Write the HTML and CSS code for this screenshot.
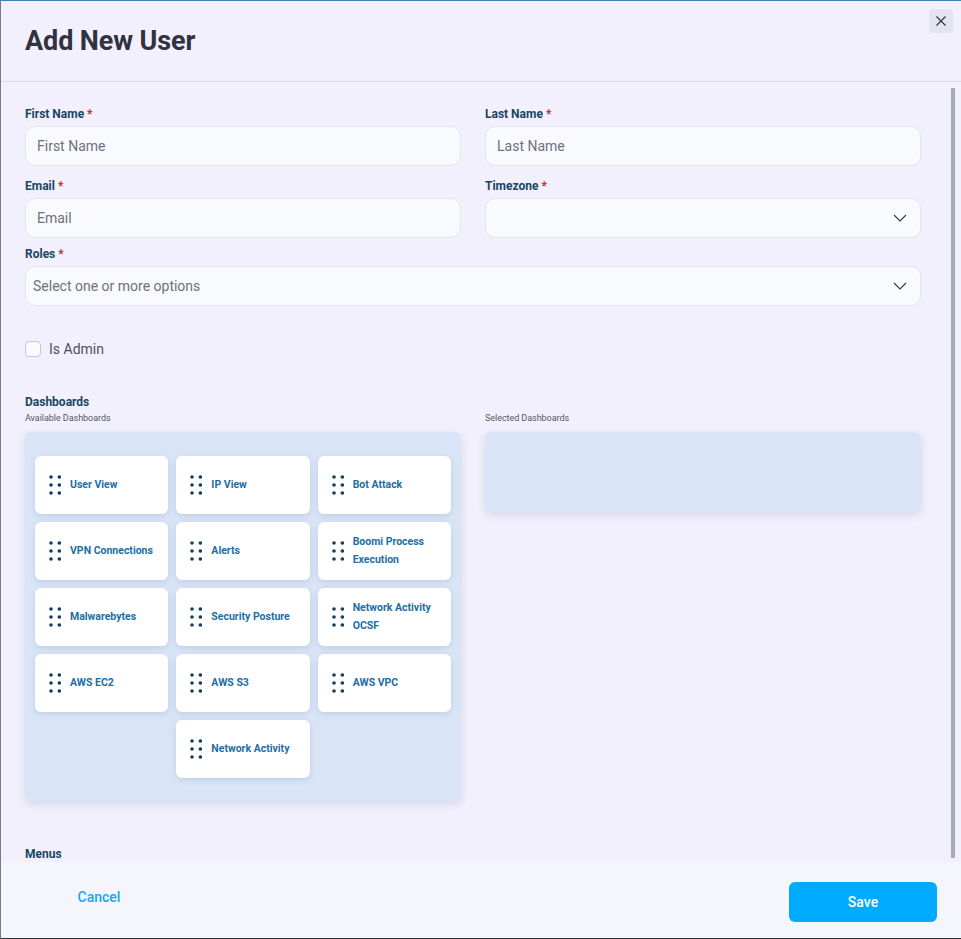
FILE: index.html
```html
<!DOCTYPE html>
<html lang="en">
<head>
<meta charset="utf-8">
<title>Add New User</title>
<link rel="stylesheet" href="styles.css">
</head>
<body>
<div class="modal">
  <header class="modal-header">
    <h1 class="title">Add New User</h1>
    <button class="close-btn" aria-label="Close">
      <svg width="10" height="10" viewBox="0 0 10 10"><path d="M0.5 0.5 L9.5 9.5 M9.5 0.5 L0.5 9.5" stroke="#35363f" stroke-width="1.2" fill="none"/></svg>
    </button>
  </header>

  <section class="modal-body">
    <div class="form-grid">
      <div class="field">
        <label class="label">First Name <span class="req">*</span></label>
        <div class="input"><span class="ph">First Name</span></div>
      </div>
      <div class="field">
        <label class="label">Last Name <span class="req">*</span></label>
        <div class="input"><span class="ph">Last Name</span></div>
      </div>
      <div class="field">
        <label class="label">Email <span class="req">*</span></label>
        <div class="input"><span class="ph">Email</span></div>
      </div>
      <div class="field">
        <label class="label">Timezone <span class="req">*</span></label>
        <div class="input select">
          <span class="ph"></span>
          <svg class="chev" width="14" height="8" viewBox="0 0 14 8"><path d="M1 1 L7 7 L13 1" stroke="#33343c" stroke-width="1.1" fill="none"/></svg>
        </div>
      </div>
    </div>

    <div class="field roles">
      <label class="label">Roles <span class="req">*</span></label>
      <div class="input select roles-input">
        <span class="ph">Select one or more options</span>
        <svg class="chev" width="14" height="8" viewBox="0 0 14 8"><path d="M1 1 L7 7 L13 1" stroke="#33343c" stroke-width="1.1" fill="none"/></svg>
      </div>
    </div>

    <div class="check-row">
      <span class="checkbox"></span>
      <span class="check-label">Is Admin</span>
    </div>

    <div class="label section-label">Dashboards</div>
    <div class="dash-grid">
      <div class="dash-col">
        <div class="sub-label">Available Dashboards</div>
        <div class="dash-box available">
          <div class="card"><svg class="grip" viewBox="0 0 12 20" width="12" height="20"><circle cx="2" cy="2" r="1.8"/><circle cx="10.3" cy="2" r="1.8"/><circle cx="2" cy="10" r="1.8"/><circle cx="10.3" cy="10" r="1.8"/><circle cx="2" cy="18" r="1.8"/><circle cx="10.3" cy="18" r="1.8"/></svg><span class="card-text">User View</span></div>
          <div class="card"><svg class="grip" viewBox="0 0 12 20" width="12" height="20"><circle cx="2" cy="2" r="1.8"/><circle cx="10.3" cy="2" r="1.8"/><circle cx="2" cy="10" r="1.8"/><circle cx="10.3" cy="10" r="1.8"/><circle cx="2" cy="18" r="1.8"/><circle cx="10.3" cy="18" r="1.8"/></svg><span class="card-text">IP View</span></div>
          <div class="card"><svg class="grip" viewBox="0 0 12 20" width="12" height="20"><circle cx="2" cy="2" r="1.8"/><circle cx="10.3" cy="2" r="1.8"/><circle cx="2" cy="10" r="1.8"/><circle cx="10.3" cy="10" r="1.8"/><circle cx="2" cy="18" r="1.8"/><circle cx="10.3" cy="18" r="1.8"/></svg><span class="card-text">Bot Attack</span></div>
          <div class="card"><svg class="grip" viewBox="0 0 12 20" width="12" height="20"><circle cx="2" cy="2" r="1.8"/><circle cx="10.3" cy="2" r="1.8"/><circle cx="2" cy="10" r="1.8"/><circle cx="10.3" cy="10" r="1.8"/><circle cx="2" cy="18" r="1.8"/><circle cx="10.3" cy="18" r="1.8"/></svg><span class="card-text">VPN Connections</span></div>
          <div class="card"><svg class="grip" viewBox="0 0 12 20" width="12" height="20"><circle cx="2" cy="2" r="1.8"/><circle cx="10.3" cy="2" r="1.8"/><circle cx="2" cy="10" r="1.8"/><circle cx="10.3" cy="10" r="1.8"/><circle cx="2" cy="18" r="1.8"/><circle cx="10.3" cy="18" r="1.8"/></svg><span class="card-text">Alerts</span></div>
          <div class="card"><svg class="grip" viewBox="0 0 12 20" width="12" height="20"><circle cx="2" cy="2" r="1.8"/><circle cx="10.3" cy="2" r="1.8"/><circle cx="2" cy="10" r="1.8"/><circle cx="10.3" cy="10" r="1.8"/><circle cx="2" cy="18" r="1.8"/><circle cx="10.3" cy="18" r="1.8"/></svg><span class="card-text">Boomi Process Execution</span></div>
          <div class="card"><svg class="grip" viewBox="0 0 12 20" width="12" height="20"><circle cx="2" cy="2" r="1.8"/><circle cx="10.3" cy="2" r="1.8"/><circle cx="2" cy="10" r="1.8"/><circle cx="10.3" cy="10" r="1.8"/><circle cx="2" cy="18" r="1.8"/><circle cx="10.3" cy="18" r="1.8"/></svg><span class="card-text">Malwarebytes</span></div>
          <div class="card"><svg class="grip" viewBox="0 0 12 20" width="12" height="20"><circle cx="2" cy="2" r="1.8"/><circle cx="10.3" cy="2" r="1.8"/><circle cx="2" cy="10" r="1.8"/><circle cx="10.3" cy="10" r="1.8"/><circle cx="2" cy="18" r="1.8"/><circle cx="10.3" cy="18" r="1.8"/></svg><span class="card-text">Security Posture</span></div>
          <div class="card"><svg class="grip" viewBox="0 0 12 20" width="12" height="20"><circle cx="2" cy="2" r="1.8"/><circle cx="10.3" cy="2" r="1.8"/><circle cx="2" cy="10" r="1.8"/><circle cx="10.3" cy="10" r="1.8"/><circle cx="2" cy="18" r="1.8"/><circle cx="10.3" cy="18" r="1.8"/></svg><span class="card-text">Network Activity OCSF</span></div>
          <div class="card"><svg class="grip" viewBox="0 0 12 20" width="12" height="20"><circle cx="2" cy="2" r="1.8"/><circle cx="10.3" cy="2" r="1.8"/><circle cx="2" cy="10" r="1.8"/><circle cx="10.3" cy="10" r="1.8"/><circle cx="2" cy="18" r="1.8"/><circle cx="10.3" cy="18" r="1.8"/></svg><span class="card-text">AWS EC2</span></div>
          <div class="card"><svg class="grip" viewBox="0 0 12 20" width="12" height="20"><circle cx="2" cy="2" r="1.8"/><circle cx="10.3" cy="2" r="1.8"/><circle cx="2" cy="10" r="1.8"/><circle cx="10.3" cy="10" r="1.8"/><circle cx="2" cy="18" r="1.8"/><circle cx="10.3" cy="18" r="1.8"/></svg><span class="card-text">AWS S3</span></div>
          <div class="card"><svg class="grip" viewBox="0 0 12 20" width="12" height="20"><circle cx="2" cy="2" r="1.8"/><circle cx="10.3" cy="2" r="1.8"/><circle cx="2" cy="10" r="1.8"/><circle cx="10.3" cy="10" r="1.8"/><circle cx="2" cy="18" r="1.8"/><circle cx="10.3" cy="18" r="1.8"/></svg><span class="card-text">AWS VPC</span></div>
          <div class="card col2"><svg class="grip" viewBox="0 0 12 20" width="12" height="20"><circle cx="2" cy="2" r="1.8"/><circle cx="10.3" cy="2" r="1.8"/><circle cx="2" cy="10" r="1.8"/><circle cx="10.3" cy="10" r="1.8"/><circle cx="2" cy="18" r="1.8"/><circle cx="10.3" cy="18" r="1.8"/></svg><span class="card-text">Network Activity</span></div>
        </div>
      </div>
      <div class="dash-col">
        <div class="sub-label">Selected Dashboards</div>
        <div class="dash-box selected"></div>
      </div>
    </div>

    <div class="label menus-label">Menus</div>

    <div class="scrollbar"></div>
  </section>

  <footer class="modal-footer">
    <button class="btn-cancel">Cancel</button>
    <button class="btn-save">Save</button>
  </footer>
</div>
</body>
</html>
```

FILE: styles.css
```css
* { box-sizing: border-box; }
html, body { margin: 0; padding: 0; }
body {
  font-family: Roboto, "Liberation Sans", Arial, sans-serif;
  background: #f1f0fc;
}
.modal {
  width: 961px;
  height: 939px;
  background: #f1f0fc;
  border-top: 1px solid #3f7fb6;
  border-left: 1px solid #7a7a80;
  border-bottom: 1px solid #2f3035;
  display: flex;
  flex-direction: column;
}
.modal-header {
  height: 81px;
  flex: none;
  border-bottom: 1px solid #d9d8e6;
  display: flex;
  align-items: flex-start;
  justify-content: space-between;
  padding: 0 8px 0 24px;
}
.title {
  margin: 22px 0 0 0;
  font-size: 27px;
  line-height: 36px;
  font-weight: 700;
  color: #31323f;
  letter-spacing: -0.1px;
}
.close-btn {
  margin-top: 8px;
  width: 24px;
  height: 24px;
  border: none;
  border-radius: 4px;
  background: #e4e4f0;
  display: flex;
  align-items: center;
  justify-content: center;
  padding: 0;
}
.modal-body {
  position: relative;
  height: 780px;
  flex: none;
  overflow: hidden;
  padding: 24px 40px 0 24px;
}
.form-grid {
  display: grid;
  grid-template-columns: 1fr 1fr;
  column-gap: 24px;
  row-gap: 12px;
}
.field { display: flex; flex-direction: column; }
.label {
  font-size: 12px;
  line-height: 16px;
  font-weight: 700;
  color: #1a4563;
  margin-bottom: 4px;
}
.req { color: #c62828; }
.input {
  height: 40px;
  background: #f9fafd;
  border: 1px solid #e2e4ef;
  border-radius: 10px;
  display: flex;
  align-items: center;
  padding: 0 11px;
  font-size: 14px;
}
.ph { color: #6d717d; }
.select { justify-content: space-between; padding-right: 13px; }
.roles { margin-top: 8px; }
.roles-input { padding-left: 7px; }
.chev { flex: none; }
.check-row {
  margin-top: 35px;
  display: flex;
  align-items: center;
  gap: 8px;
  height: 16px;
}
.checkbox {
  width: 16px;
  height: 16px;
  border: 1px solid #c6c8d2;
  border-radius: 4px;
  background: #fafbfe;
}
.check-label {
  font-size: 14px;
  color: #4d505b;
}
.section-label {
  margin-top: 37px;
  margin-bottom: 2px;
}
.dash-grid {
  display: grid;
  grid-template-columns: 1fr 1fr;
  column-gap: 24px;
  align-items: start;
}
.dash-col { min-width: 0; }
.sub-label {
  font-size: 9px;
  line-height: 12px;
  color: #555862;
  margin-bottom: 8px;
  letter-spacing: -0.05px;
}
.dash-box {
  background: #d9e5f7;
  border-radius: 6px;
  box-shadow: 0 3px 8px rgba(60, 70, 110, 0.14);
}
.available {
  display: grid;
  grid-template-columns: repeat(3, 1fr);
  gap: 8px;
  padding: 24px 10px 23px 10px;
  grid-auto-rows: 58px;
}
.selected { height: 80px; }
.card {
  background: #ffffff;
  border-radius: 6px;
  box-shadow: 0 2px 6px rgba(70, 90, 140, 0.16);
  display: flex;
  align-items: center;
  padding: 0 8px 0 14px;
  gap: 9px;
  min-width: 0;
}
.col2 { grid-column: 2; }
.grip { flex: none; fill: #143f5e; }
.card-text {
  font-size: 10.5px;
  line-height: 18px;
  font-weight: 700;
  color: #1c6ea6;
}
.menus-label { margin-top: 45px; }
.scrollbar {
  position: absolute;
  right: 6px;
  top: 6px;
  bottom: 4px;
  width: 4px;
  background: #a9abbb;
}
.modal-footer {
  flex: 1;
  background: #f5f6fb;
  display: flex;
  justify-content: space-between;
  align-items: flex-start;
  padding: 20px 24px 0 24px;
}
.btn-cancel {
  width: 148px;
  height: 30px;
  border: none;
  background: transparent;
  color: #17a6ef;
  font-family: inherit;
  font-size: 14px;
  font-weight: 500;
  padding: 0;
}
.btn-save {
  width: 148px;
  height: 40px;
  border: none;
  border-radius: 6px;
  background: #00aaff;
  color: #ffffff;
  font-family: inherit;
  font-size: 14px;
  font-weight: 500;
}
```
